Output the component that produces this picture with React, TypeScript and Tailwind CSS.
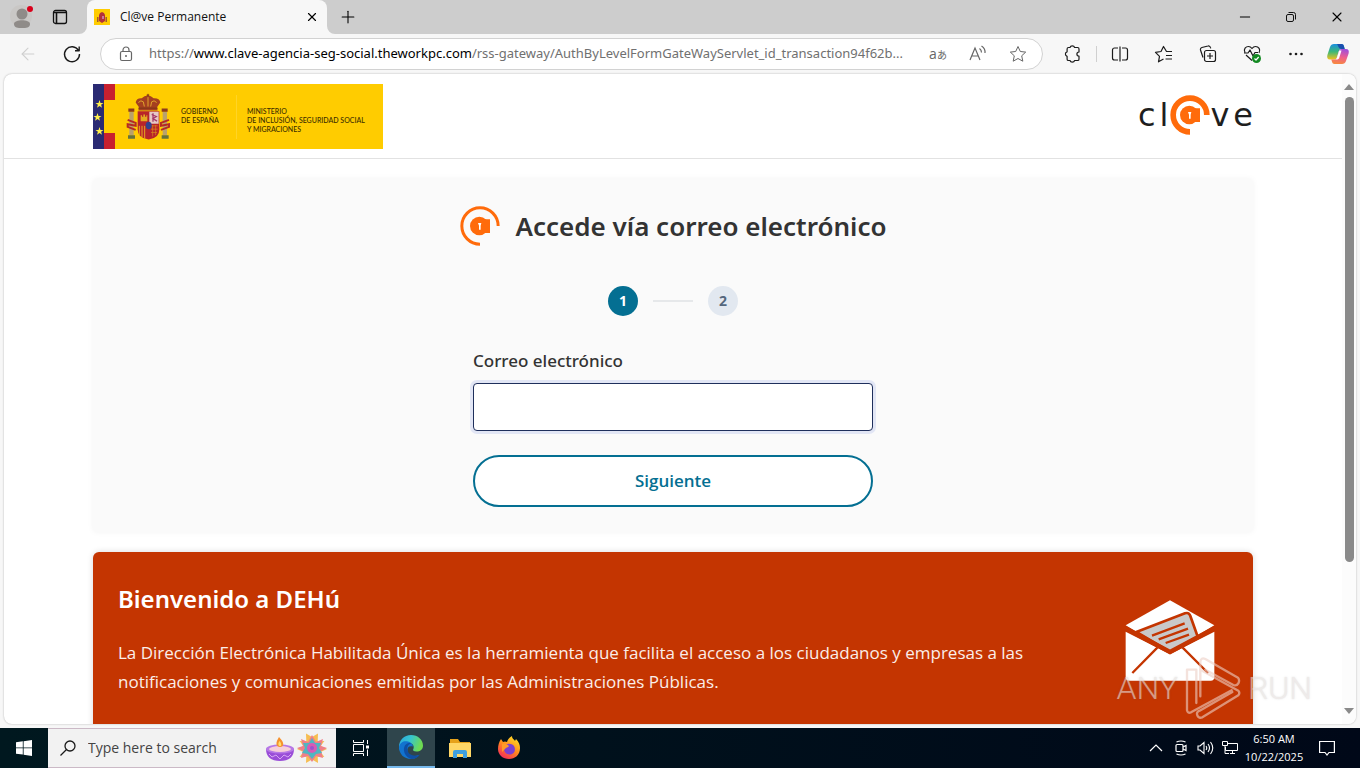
import React, { useState } from 'react';
import { Minus, X, Plus, ArrowLeft } from 'lucide-react';

const ClaveMark: React.FC<{ ring: number }> = ({ ring }) => (
  <svg className="w-10 h-10 shrink-0" viewBox="0 0 120 120" fill="none">
    <path
      d={`M${119 - ring / 2} 60 A${59 - ring / 2} ${59 - ring / 2} 0 1 0 60 ${119 - ring / 2}`}
      stroke="#ff6b0b"
      strokeWidth={ring}
    />
    <circle cx="58" cy="60" r="28" fill="#ff6b0b" />
    <path d="M60 40h30v41H60z" fill="#ff6b0b" />
    <path d="M54 51h10l-2 8v12h-5V59z" fill="#fff" />
  </svg>
);

const CoatOfArms = () => (
  <svg className="w-11 h-[47px] shrink-0" viewBox="123 50 132 140">
    <path d="M152 78q2-14 18-13 8-8 18-8t18 8q18-1 20 13l-10 14 2 10h-58l2-10z" fill="#a5401f" />
    <path d="M160 78q8-9 15-2l3 14M215 78q-8-9-15-2l-3 14M189 60v30" stroke="#e0a32c" strokeWidth="3" fill="none" />
    <path d="M160 95h58M189 52v10M185 56h8" stroke="#7d3317" strokeWidth="3" />
    <path d="M158 104h65v55q0 26-32 30-33-4-33-30z" fill="#b8242a" />
    <path d="M193 106h28v36h-28z" fill="#e5c8c5" />
    <path d="M200 114l14 6-10 6 12 8M204 110v26" stroke="#a63a6b" strokeWidth="4" fill="none" />
    <path d="M167 134v-18h4v5h4v-7h5v7h4v-5h3v18z" fill="#e4a920" />
    <path d="M163 148v28M171 148v34M179 148v38" stroke="#e4a920" strokeWidth="3" />
    <path d="M198 148h20M198 158h20M198 168h18M203 146v34M212 146v30" stroke="#d98b1d" strokeWidth="2" />
    <ellipse cx="191" cy="147" rx="9" ry="11" fill="#33418c" />
    <path d="M133 106h13v70h-13zM233 106h13v70h-13z" fill="#b9a16c" />
    <path d="M130 96h18v10h-18zM230 96h18v10h-18z" fill="#8c3b1c" />
    <path d="M129 176h21v11h-21zM230 176h21v11h-21z" fill="#64723e" />
    <path d="M128 130l24 9v9l-24-5v8l24 9M252 130l-24 9v9l24-5v8l-24 9" stroke="#b42a25" strokeWidth="6" fill="none" />
  </svg>
);

const SpainFavicon = () => (
  <svg className="w-4 h-4 shrink-0" viewBox="0 0 16 16">
    <path d="M0 0h16v16H0z" fill="#fc0" />
    <path d="M5 6l1-2 2-1 2 1 1 2v6l-3 2-3-2z" fill="#b3303a" />
    <path d="M3 8h1.500v5H3zM11.500 8H13v5h-1.500z" fill="#a35b2b" />
    <path d="M8 7h2v3H8z" fill="#c9799a" />
  </svg>
);

const TabCorner: React.FC<{ className: string }> = ({ className }) => (
  <svg className={`absolute bottom-0 w-2 h-2 ${className}`} viewBox="0 0 8 8">
    <path d="M8 0v8H0a8 8 0 0 0 8-8z" fill="#f7f7f7" />
  </svg>
);

const TitleBar = () => (
  <div className="h-[34px] shrink-0 bg-[#cdcdcd] flex items-center">
    <button aria-label="Profile" className="w-[42px] h-full flex items-center justify-center">
      <svg className="w-6 h-6" viewBox="0 0 24 24">
        <circle cx="12" cy="11" r="11" fill="#c9c7c5" />
        <circle cx="13" cy="9" r="5.500" fill="#8f8b88" />
        <path d="M5 19c0-5 16-5 16 0 0 4-4 4-8 4s-8 0-8-4z" fill="#8f8b88" />
        <circle cx="21" cy="4" r="3" fill="#d9001b" />
      </svg>
    </button>
    <button aria-label="Tab actions" className="w-9 h-full flex items-center justify-center">
      <svg className="w-4 h-4" viewBox="0 0 16 16" fill="none" stroke="#111" strokeWidth="1.300">
        <rect x="1.500" y="1.500" width="13" height="13" rx="2" />
        <path d="M2 3.500h12M4.500 4v10" strokeWidth="1.600" />
      </svg>
    </button>
    <div className="relative ml-[9px] w-60 h-full bg-[#f7f7f7] rounded-t-lg flex items-center gap-2.5 pl-[7px] pr-2">
      <TabCorner className="-left-2" />
      <TabCorner className="-right-2 -scale-x-100" />
      <SpainFavicon />
      <span className="flex-1 text-xs text-[#111]">Cl@ve Permanente</span>
      <button aria-label="Close tab"><X className="w-3.5 h-3.5" strokeWidth={2} /></button>
    </div>
    <button aria-label="New tab" className="w-[42px] h-full flex items-center justify-center">
      <Plus className="w-5 h-5" strokeWidth={1.300} />
    </button>
    <div className="flex-1" />
    <button aria-label="Minimize" className="w-[46px] h-full flex items-center justify-center">
      <Minus className="w-4 h-4" strokeWidth={1.500} />
    </button>
    <button aria-label="Restore" className="w-[46px] h-full flex items-center justify-center">
      <svg className="w-3 h-3" viewBox="0 0 12 12" fill="none" stroke="#111">
        <rect x="1.500" y="3.500" width="7" height="7" rx="1.500" />
        <path d="M3.500 1.500h5a2 2 0 0 1 2 2v5" />
      </svg>
    </button>
    <button aria-label="Close" className="w-[46px] h-full flex items-center justify-center">
      <X className="w-4 h-4" strokeWidth={1.600} />
    </button>
  </div>
);

const ToolButton: React.FC<{ label: string; children: React.ReactNode }> = ({ label, children }) => (
  <button aria-label={label} className="w-11 h-8 shrink-0 flex items-center justify-center">
    <svg className="w-5 h-5" viewBox="0 0 20 20" fill="none" stroke="#1b1b1b" strokeWidth="1.200" strokeLinejoin="round">
      {children}
    </svg>
  </button>
);

const Toolbar = () => (
  <div className="h-10 shrink-0 bg-[#f7f7f7] flex items-center pl-1.5 pr-0.5">
    <button aria-label="Back" className="w-11 flex justify-center text-[#cfcfcf]">
      <ArrowLeft className="w-5 h-5" strokeWidth={1.300} />
    </button>
    <ToolButton label="Refresh">
      <path d="M16.500 6.500A7.500 7.500 0 1 0 17.500 10M17.200 2.500v4.300H13" strokeWidth="1.400" />
    </ToolButton>
    <div className="ml-1.5 mr-2 flex-1 min-w-0 h-8 rounded-full bg-white border border-[#d2d2d2] flex items-center pl-[17px] pr-1">
      <svg className="w-4 h-4 shrink-0" viewBox="0 0 16 16" fill="none" stroke="#666" strokeWidth="1.200">
        <rect x="2.500" y="5.500" width="11" height="9" rx="1.500" />
        <path d="M5 5.500V4a3 3 0 0 1 6 0v1.500" />
        <circle cx="8" cy="10" r="1" fill="#666" stroke="none" />
      </svg>
      <div className="ml-[15px] flex-1 min-w-0 overflow-hidden whitespace-nowrap font-['Noto_Sans'] text-[13px] text-[#707070]">
        https://<span className="text-black">www.clave-agencia-seg-social.theworkpc.com</span>/rss-gateway/AuthByLevelFormGateWayServlet_id_transaction94f62b...
      </div>
      <button className="w-10 shrink-0 text-sm text-[#666]" aria-label="Translate">
        a<span className="text-[10px]">あ</span>
      </button>
      <button aria-label="Read aloud" className="w-10 shrink-0 flex justify-center">
        <svg className="w-5 h-5" viewBox="0 0 20 20" fill="none" stroke="#666" strokeWidth="1.200">
          <path d="M2 16L7 4l5 12M4 12h6M11.500 4.500q2 1.500 2 4M13.500 2q4 2.500 3.500 7" />
        </svg>
      </button>
      <button aria-label="Add to favorites" className="w-10 shrink-0 flex justify-center">
        <svg className="w-5 h-5" viewBox="0 0 20 20" fill="none" stroke="#666" strokeLinejoin="round">
          <path d="M10 2.500l2.300 5 5.400.6-4 3.700 1.100 5.400-4.800-2.700-4.800 2.700 1.100-5.400-4-3.700 5.400-.6z" />
        </svg>
      </button>
    </div>
    <ToolButton label="Extensions">
      <path d="M5.500 3.500H7a2.400 2.400 0 0 1 4.600 0h3q1.400 0 1.400 1.400V8a2.100 2.100 0 0 0 0 4.200v3q0 1.300-1.400 1.300h-3a2.400 2.400 0 0 1-4.600 0H5.500q-1.400 0-1.400-1.300v-2.800a2.400 2.400 0 0 1 0-4.600V4.900q0-1.400 1.400-1.400z" />
    </ToolButton>
    <div className="w-px h-4 mx-px bg-[#d0d0d0]" />
    <ToolButton label="Split screen">
      <path d="M8 4H4.500a2 2 0 0 0-2 2v8a2 2 0 0 0 2 2H8M12 4h3.500a2 2 0 0 1 2 2v8a2 2 0 0 1-2 2H12M10 2.500v15" />
    </ToolButton>
    <ToolButton label="Favorites">
      <path d="M18 7.500h-5.500L9.500 2.500 7 7.500l-5.500.8 4 4-1 5.500L9.500 15M12 11.500h6M11.500 15h6.500" />
    </ToolButton>
    <ToolButton label="Collections">
      <path d="M5 13.500L2.500 6a2 2 0 0 1 1.400-2.500l6-1.500a2 2 0 0 1 2.500 1.400l.3 1" />
      <rect x="6.500" y="6.500" width="11" height="11" rx="2" />
      <path d="M12 9v6M9 12h6" />
    </ToolButton>
    <ToolButton label="Browser essentials">
      <path d="M3 8.500C1 5 4 2.500 6.500 2.500 8.500 2.500 10 4.500 10 4.500s1.500-2 3.500-2c3 0 5.500 3 3.500 6.500M2 9h4L8 6l3 6 2-3.500h3M4 11l6 5.500" />
      <circle cx="14.500" cy="14.500" r="4.500" fill="#138a22" stroke="none" />
      <path d="M12.500 14.500l1.500 1.500 2.700-3" stroke="#fff" />
    </ToolButton>
    <ToolButton label="Settings and more">
      <g fill="#1b1b1b" stroke="none">
        <circle cx="4.500" cy="10" r="1.300" /><circle cx="10" cy="10" r="1.300" /><circle cx="15.500" cy="10" r="1.300" />
      </g>
    </ToolButton>
    <button aria-label="Copilot" className="w-10 shrink-0 flex justify-center">
      <svg className="w-6 h-6" viewBox="0 0 24 24">
        <defs>
          <linearGradient id="cpA" x1="0" y1="0" x2="0" y2="1">
            <stop offset="0" stopColor="#1b8fe0" /><stop offset=".5" stopColor="#3cb878" /><stop offset="1" stopColor="#f2c21c" />
          </linearGradient>
          <linearGradient id="cpB" x1="0.500" y1="0" x2="0.300" y2="1">
            <stop offset="0" stopColor="#a34fd8" /><stop offset=".5" stopColor="#ef5f8e" /><stop offset="1" stopColor="#f78a3c" />
          </linearGradient>
        </defs>
        <path d="M8 2h7.500c1.500 0 2 .8 2.400 2l.8 3h-3.200c-1.500 0-2.200.8-2.600 2l-1.800 6c-.5 1.700-1.200 2.500-3 2.500H4C1.500 17.500.7 15.500 1.400 13L4 5c.7-2 2-3 4-3z" fill="url(#cpA)" />
        <path d="M11 2h4.500c1.500 0 2 .8 2.400 2l.8 3h-3.200C12.500 7 12.500 4 11 2z" fill="#1a4fae" />
        <path d="M16 22H8.500c-1.500 0-2-.8-2.400-2l-.8-2.500h3c1.500 0 2.300-.8 2.700-2l1.800-6c.5-1.700 1.200-2.500 3-2.500H20c2.500 0 3.300 2 2.600 4.500L20 19c-.7 2-2 3-4 3z" fill="url(#cpB)" />
        <path d="M13.200 8.500L10.800 16q-.6 1.500-2.500 1.500h3.200l1.500-1 2.500-8z" fill="#fff" />
      </svg>
    </button>
  </div>
);

const SiteHeader = () => (
  <header className="border-b border-[#e2e2e2] pt-2.5 pb-[9px]">
    <div className="max-w-[1160px] mx-auto flex items-center justify-between">
      <div className="w-[290px] h-[65px] bg-[#fc0] flex items-center font-[Lato] font-medium text-[7px] leading-[9px] text-[#3b2c00]">
        <svg className="w-[22px] h-full shrink-0" viewBox="0 0 22 65">
          <path d="M0 0h11v65H0z" fill="#2a2a73" />
          <path d="M11 0h11v16H11zM11 49h11v16H11z" fill="#c8202f" />
          <g fill="#fff04a">
            <path id="star" d="M6.500 16l1 3h3l-2.400 1.800.9 3-2.500-1.800-2.500 1.800.9-3L2.500 19h3z" />
            <use href="#star" x="-2" y="13" />
            <use href="#star" y="27" />
          </g>
        </svg>
        <div className="ml-[11px]"><CoatOfArms /></div>
        <div className="ml-[11px] w-[55px] pb-0.5">GOBIERNO<br />DE ESPAÑA</div>
        <div className="w-px h-11 bg-[#ffd426]" />
        <div className="ml-2.5 pt-[7px] whitespace-nowrap">
          MINISTERIO<br />DE INCLUSIÓN, SEGURIDAD SOCIAL<br />Y MIGRACIONES
        </div>
      </div>
      <div className="flex items-center pb-1 font-['DejaVu_Sans'] text-[32px] leading-10 text-[#1e1e1e]">
        <span className="mr-1">c</span>
        <span className="mr-0.5">l</span>
        <ClaveMark ring={17} />
        <span className="mr-1">v</span>
        <span>e</span>
      </div>
    </div>
  </header>
);

const LoginCard = () => {
  const [email, setEmail] = useState('');

  return (
    <section className="mt-5 rounded bg-[#fafafa] shadow-[0_0_6px_rgba(0,0,0,0.05)] pt-[27px] pb-[25px]">
      <div className="flex items-center justify-center gap-4">
        <ClaveMark ring={9} />
        <h1 className="font-['Noto_Sans'] text-[26px] leading-10 font-semibold text-[#333]">Accede vía correo electrónico</h1>
      </div>
      <div className="mt-10 flex items-center justify-center gap-[15px] text-sm font-bold">
        <span className="w-[30px] h-[30px] rounded-full bg-[#046f92] text-white flex items-center justify-center">1</span>
        <span className="w-10 h-0.5 bg-[#e6e8ea]" />
        <span className="w-[30px] h-[30px] rounded-full bg-[#e2e8f0] text-[#55677d] flex items-center justify-center">2</span>
      </div>
      <form className="mt-[33px] w-[400px] mx-auto" onSubmit={(e) => e.preventDefault()}>
        <label htmlFor="email" className="block font-['Noto_Sans'] text-[17px] leading-6 font-medium text-[#333]">Correo electrónico</label>
        <input
          id="email"
          type="email"
          value={email}
          onChange={(e) => setEmail(e.target.value)}
          className="mt-[10px] w-full h-12 px-3 bg-white border border-[#1f2f5c] rounded ring-3 ring-[#e2e6f5] outline-none"
        />
        <button type="submit" className="mt-6 block w-full h-[52px] rounded-full border-2 border-[#046f92] bg-white text-[17px] font-semibold text-[#046f92]">
          Siguiente
        </button>
      </form>
    </section>
  );
};

const Envelope = () => (
  <svg className="w-[90px] h-[82px] shrink-0" viewBox="74 166 270 246">
    <path d="M76 242L209 167l133 75-133 80z" fill="#fff" />
    <path d="M76 261l133 68 133-68v136q0 11-11 11H87q-11 0-11-11z" fill="#fff" />
    <path d="M108 262l146-56q12-4 16 8l22 62-83 46z" fill="#c9c9c9" stroke="#c43501" strokeWidth="8" />
    <path d="M74 250l135 72 135-72" fill="none" stroke="#c43501" strokeWidth="13" />
    <path d="M155 273l98-37M175 284l88-32M196 295l70-25M171 309l-75 76M247 309l76 76" stroke="#c43501" strokeWidth="7" />
  </svg>
);

const WelcomeBanner = () => (
  <section className="mt-5 flex items-start rounded-t-md bg-[#c43501] text-white pl-[25px] pr-[38px] shadow-[0_0_6px_rgba(0,0,0,0.15)]">
    <div className="flex-1 pt-[29px] pb-16">
      <h2 className="font-['Noto_Sans'] text-2xl leading-9 font-semibold">Bienvenido a DEHú</h2>
      <p className="mt-[21px] max-w-[930px] text-[17px] leading-[29px] text-[#fbeee9]">
        La Dirección Electrónica Habilitada Única es la herramienta que facilita el acceso a los ciudadanos y empresas a las
        notificaciones y comunicaciones emitidas por las Administraciones Públicas.
      </p>
    </div>
    <div className="pt-12"><Envelope /></div>
  </section>
);

const Watermark = () => (
  <div className="absolute right-11 bottom-1 flex items-center gap-[7px] opacity-60 pointer-events-none font-[Roboto] font-light text-[32px] leading-[64px] text-[#e4dedc] [text-shadow:0_0_2px_rgba(120,120,120,0.4)]">
    <span>ANY</span>
    <svg className="w-14 h-16" viewBox="238 200 168 190" fill="none" stroke="#eed0c6" strokeWidth="7" strokeLinejoin="round" strokeLinecap="round">
      <path d="M272 340V240h-28v122q2 10 12 6l122-66" />
      <path d="M284 320V216q2-14 15-8l98 56q6 8 1 17t-15 5l-84-46" />
      <path d="M284 240l114 63q6 7 0 14L290 383q-11 4-15-6t7-14l98-56" />
    </svg>
    <span>RUN</span>
  </div>
);

const Taskbar = () => (
  <footer className="h-10 shrink-0 bg-linear-to-r from-[#00181f] to-[#000818] flex items-center text-white">
    <button aria-label="Start" className="w-12 h-full flex items-center justify-center">
      <svg className="w-4 h-4" viewBox="0 0 16 16" fill="#fff">
        <path d="M0 2.300l6.800-1v6.200H0zM7.600 1.200L16 0v7.500H7.600zM0 8.300h6.800v6.300L0 13.700zM7.600 8.300H16V16l-8.400-1.200z" />
      </svg>
    </button>
    <div className="w-72 h-full bg-[#f2f2f2] border-y border-[#cbb9c6] flex items-center pl-3">
      <svg className="w-4 h-4 shrink-0" viewBox="0 0 16 16" fill="none" stroke="#1a1a1a" strokeWidth="1.300">
        <circle cx="10" cy="6" r="5" />
        <path d="M6.500 9.500L0.500 15.500" />
      </svg>
      <input
        type="text"
        aria-label="Search"
        placeholder="Type here to search"
        className="ml-3 w-44 bg-transparent text-sm text-black placeholder-[#444] outline-none"
      />
      <svg className="w-16 h-8 shrink-0" viewBox="0 0 64 32">
        <path d="M2 17q14-6 28 0c0 8-5 12-14 12S2 25 2 17z" fill="#9a4ed8" />
        <ellipse cx="16" cy="17" rx="14" ry="4.500" fill="#b678e6" />
        <ellipse cx="16" cy="17" rx="11" ry="3" fill="#f6cfd9" />
        <path d="M15 5c-4 6-3 10 1 10s5-4-1-10z" fill="#f6912d" />
        <path d="M15.500 9c-2 3-1 5 .5 5s2-2-.5-5z" fill="#ffe06a" />
        <path d="M5 22l3 3 4-2 4 4 4-4 4 2 3-3" fill="none" stroke="#d6a5f3" />
        <path d="M54 1.600L53.700 9.300 60.400 8.900 56.700 14 63 17 56.700 20 60.400 25 53.700 24.700 54 31 48 27.500 42 31 42.300 24.700 35.600 25 39.300 20 33 17 39.300 14 35.600 8.900 42.300 9.300 42 1.600 48 5z" fill="#f6bd52" />
        <path d="M48 3l4 7 7-3-2 7 6 2-6 3 2 7-7-2-4 6-4-6-7 2 2-7-6-3 6-2-2-7 7 3z" fill="#ef7f89" />
        <path d="M48 6l3 5 6 0-2 5 3 5-6 1-4 5-4-5-6-1 3-5-2-5 6 0z" fill="#4fb6c0" />
        <circle cx="48" cy="16" r="5" fill="#d75bb4" />
        <circle cx="48" cy="16" r="2" fill="#9854ce" />
      </svg>
    </div>
    <button aria-label="Task view" className="w-[51px] h-full flex items-center justify-center">
      <svg className="w-[17px] h-4" viewBox="0 0 17 16" fill="none" stroke="#fff">
        <path d="M.5 0v2.500h10V0M.5 4.500h10v7H.5zM.5 16v-2.500h10V16M14.500 0v4M14.500 9.500V16" />
        <path d="M13 5.500h3v3h-3z" fill="#fff" stroke="none" />
      </svg>
    </button>
    <button aria-label="Microsoft Edge" className="w-12 h-full bg-[#2f454c] border-b-2 border-[#76b9ed] flex items-center justify-center">
      <svg className="w-6 h-6" viewBox="0 0 24 24">
        <defs>
          <linearGradient id="edgeTop" x1="0" y1="0" x2="1" y2="0.300">
            <stop offset="0" stopColor="#2aa5e0" /><stop offset=".5" stopColor="#36c4cf" /><stop offset="1" stopColor="#6edb52" />
          </linearGradient>
        </defs>
        <path d="M0 12C0 5 5 0 12 0s12 5 12 10.500c0 4-3 6-6.500 6-3 0-4-1.200-3.200-2.500.9-1.500.7-5.500-3.800-5.800C5 8 1 11 0 16z" fill="url(#edgeTop)" />
        <path d="M0 12C1 7 5 5.500 9 6.500c3 .6 5 3 5 5-4-1-6 1-5.500 4.500.6 4 5 6.500 11.500 4C17.500 23 15 24 12 24 5 24 0 19 0 12z" fill="#1273cf" />
        <path d="M8.500 15c-1-4 2-6.500 4-6.500-5-2-8 2.500-7.500 7C5.500 20 9 23.500 13 24c3-.2 5.800-1.500 8-4.500-5 2.500-11.500 1-12.500-4.500z" fill="#0e4fa5" />
      </svg>
    </button>
    <button aria-label="File Explorer" className="w-[50px] h-full flex items-center justify-center">
      <svg className="w-[22px] h-[19px]" viewBox="0 0 22 19">
        <path d="M1 0h8l2 3h10v15H1z" fill="#e6a21b" />
        <path d="M0 4h22v14H0z" fill="#ffd766" />
        <path d="M4 19v-6q0-2 2-2h10q2 0 2 2v6h-4v-4H8v4z" fill="#3d9fe0" />
      </svg>
    </button>
    <button aria-label="Firefox" className="w-12 h-full flex items-center justify-center">
      <svg className="w-6 h-6" viewBox="0 0 24 24">
        <defs>
          <linearGradient id="fox" x1="0.800" y1="0" x2="0.200" y2="1">
            <stop offset="0" stopColor="#ffe226" /><stop offset=".5" stopColor="#ff8a1d" /><stop offset="1" stopColor="#f5235f" />
          </linearGradient>
        </defs>
        <path d="M4 3l2 3q2-1 4 0c1-3 3-5 5-6 0 3 2 3 3 5l1-2c3 3 4 6 4 9 0 7-5 11-11 11S1 19 1 13c0-4 1-7 3-10z" fill="url(#fox)" />
        <path d="M7 10c2-3 9-3 10.500 1 1.500 5-1.500 7.500-5 7.500S6.500 15 7 12z" fill="#7a3fd1" />
        <path d="M5 8c3-1 5 0 7 2-1 2-3 1-4 3l-3 3z" fill="#ff9a28" />
      </svg>
    </button>
    <div className="flex-1" />
    <div className="flex items-center gap-2">
      <svg className="w-3.5 h-4" viewBox="0 0 14 16" fill="none" stroke="#fff" strokeWidth="1.200"><path d="M1 11l6-6 6 6" /></svg>
      <svg className="w-4 h-4 ml-0.5" viewBox="0 0 16 16" fill="none" stroke="#fff" strokeWidth="1.200">
        <rect x="3" y="4.500" width="7" height="7" rx="1" />
        <path d="M10 7l3-1.500v5L10 9M3.500 2Q8 0 12.500 2M3.500 14q4.500 2 9 0" />
      </svg>
      <svg className="w-[17px] h-4" viewBox="0 0 17 16" fill="none" stroke="#fff" strokeWidth="1.100">
        <path d="M1 6h2l4-3.500v11L3 10H1zM9 6q1.500 2 0 4M11 4q3 4 0 8M13.500 2q4.500 6 0 12" />
      </svg>
      <svg className="w-4 h-4" viewBox="0 0 16 16" fill="none" stroke="#fff">
        <path d="M5.500 3.500h10v7h-12V7M8 13.500h5M10.500 11v2M.5 1.500h5v4h-5zM3 6v7.500h4" />
      </svg>
    </div>
    <div className="ml-1.5 w-[60px] text-center text-[11px] leading-[18px] whitespace-nowrap">
      <div>6:50 AM</div>
      <div>10/22/2025</div>
    </div>
    <button aria-label="Notifications" className="w-[46px] h-full flex items-center justify-center mr-2.5">
      <svg className="w-4 h-4" viewBox="0 0 16 16" fill="none" stroke="#fff" strokeWidth="1.200">
        <path d="M.6 1.500h14.800v11H10L8 15l-2-2.500H.6z" />
      </svg>
    </button>
  </footer>
);

const App: React.FC = () => (
  <div className="h-screen flex flex-col overflow-hidden bg-[#f7f7f7] font-['Open_Sans','Noto_Sans_CJK_JP',sans-serif]">
    <TitleBar />
    <Toolbar />
    <div className="relative flex-1 min-h-0 mx-1 mb-1 flex rounded-lg bg-white overflow-hidden shadow-[0_0_2px_rgba(0,0,0,0.3)]">
      <div className="flex-1 overflow-hidden">
        <SiteHeader />
        <main className="max-w-[1160px] mx-auto">
          <LoginCard />
          <WelcomeBanner />
        </main>
      </div>
      <div className="w-3.5 bg-[#fcfcfc] flex flex-col items-center py-2.5">
        <svg className="w-2.5 h-1.5 shrink-0" viewBox="0 0 10 6"><path d="M5 0l5 6H0z" fill="#8a8a8a" /></svg>
        <div className="flex-1 w-full py-[7px] flex justify-center">
          <div className="w-[9px] h-[77%] rounded-full bg-[#8a8a8a]" />
        </div>
        <svg className="w-2.5 h-1.5 shrink-0" viewBox="0 0 10 6"><path d="M0 0h10L5 6z" fill="#8a8a8a" /></svg>
      </div>
      <Watermark />
    </div>
    <Taskbar />
  </div>
);

export default App;
